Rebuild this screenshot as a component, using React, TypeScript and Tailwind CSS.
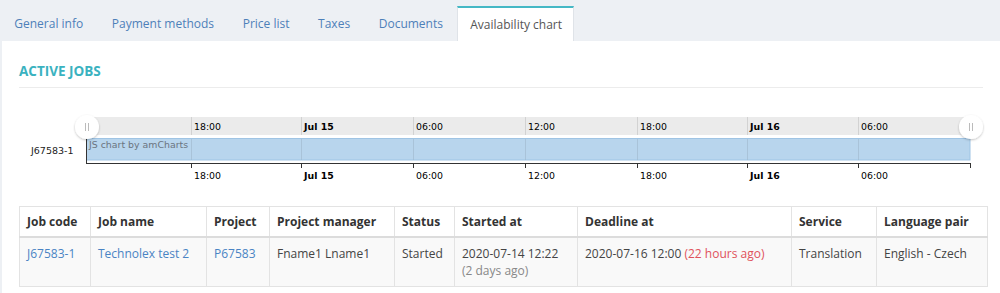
import React from "react";

const gridX = [191, 301, 413, 525, 637, 747, 858];
const labels = [
  { t: "18:00", b: false },
  { t: "Jul 15", b: true },
  { t: "06:00", b: false },
  { t: "12:00", b: false },
  { t: "18:00", b: false },
  { t: "Jul 16", b: true },
  { t: "06:00", b: false },
];

function Chart() {
  const font = "'DejaVu Sans', Verdana, sans-serif";
  return (
    <svg width="998" height="90" viewBox="2 100 998 90" className="block">
      <defs>
        <filter id="sh" x="-50%" y="-50%" width="200%" height="200%">
          <feDropShadow dx="0" dy="1" stdDeviation="1.3" floodColor="#000" floodOpacity="0.25" />
        </filter>
      </defs>
      <text x="31" y="154" fontFamily={font} fontSize="9.5" fill="#222">J67583-1</text>
      <rect x="87" y="117" width="883" height="18" fill="#ebebeb" />
      {gridX.map((x) => (
        <line key={"g" + x} x1={x + 0.5} x2={x + 0.5} y1="117" y2="135" stroke="#d2d2d2" strokeWidth="1" />
      ))}
      <rect x="86.5" y="138.5" width="883.5" height="21.5" fill="#b8d5ed" stroke="#9fc4e4" strokeWidth="1" />
      {gridX.map((x) => (
        <line key={"b" + x} x1={x + 0.5} x2={x + 0.5} y1="139" y2="160" stroke="#9fb8cc" strokeOpacity="0.6" strokeWidth="1" />
      ))}
      <text x="89" y="148" fontFamily={font} fontSize="9.4" fill="#6b7480">JS chart by amCharts</text>
      <line x1="86" x2="970.5" y1="163.5" y2="163.5" stroke="#333" strokeWidth="1" />
      <line x1="86.5" x2="86.5" y1="138" y2="164" stroke="#333" strokeWidth="1" />
      {[...gridX, 970].map((x) => (
        <line key={"t" + x} x1={x + 0.5} x2={x + 0.5} y1="163" y2="168" stroke="#333" strokeWidth="1" />
      ))}
      {gridX.map((x, i) => (
        <text key={"lt" + i} x={x + 3} y="130" fontFamily={font} fontSize="9.4" fontWeight={labels[i].b ? "bold" : "normal"} fill="#000">
          {labels[i].t}
        </text>
      ))}
      {gridX.map((x, i) => (
        <text key={"lb" + i} x={x + 3} y="179" fontFamily={font} fontSize="9.4" fontWeight={labels[i].b ? "bold" : "normal"} fill="#000">
          {labels[i].t}
        </text>
      ))}
      {[87, 971].map((cx) => (
        <g key={"h" + cx}>
          <circle cx={cx} cy="127" r="12" fill="#fff" filter="url(#sh)" />
          <line x1={cx - 1.5} x2={cx - 1.5} y1="123" y2="131" stroke="#bbb" strokeWidth="1" />
          <line x1={cx + 1.5} x2={cx + 1.5} y1="123" y2="131" stroke="#bbb" strokeWidth="1" />
        </g>
      ))}
    </svg>
  );
}

const tabs = ["General info", "Payment methods", "Price list", "Taxes", "Documents"];

export default function App() {
  const th = "border border-[#e3e3e3] border-b-2 border-b-[#dcdcdc] px-[7px] py-[6px] text-left font-bold text-[#333] align-top";
  const td = "border border-[#e3e3e3] px-[7px] py-[7px] text-left align-top";
  return (
    <div className="w-[1000px] h-[293px] bg-[#edf0f4] overflow-hidden font-['Open_Sans',sans-serif]">
      <div className="flex h-[41px] items-end">
        {tabs.map((t) => (
          <div key={t} className="h-[35px] px-[14.3px] flex items-center text-[12px] text-[#4d80b9]">
            {t}
          </div>
        ))}
        <div className="h-[35px] pl-[12px] pr-[11px] flex items-center text-[12px] text-[#555] bg-white border-t-2 border-t-[#45b8c5] border-x border-x-[#dfe3e8]">
          Availability chart
        </div>
      </div>
      <div className="ml-[2px] bg-white h-[252px]">
        <div className="px-[17px] pt-[21px]">
          <div className="text-[13.5px] font-bold text-[#3ab2c0] leading-[18px] pb-[7px] border-b border-[#ececec]">
            ACTIVE JOBS
          </div>
        </div>
        <div className="pt-[12px]">
          <Chart />
        </div>
        <div className="px-[17px] pt-[16px]">
          <table className="border-collapse w-[968px] table-fixed text-[12px] leading-[17px] text-[#444]">
            <colgroup>
              <col className="w-[71px]" />
              <col className="w-[116px]" />
              <col className="w-[63px]" />
              <col className="w-[125px]" />
              <col className="w-[60px]" />
              <col className="w-[123px]" />
              <col className="w-[214px]" />
              <col className="w-[85px]" />
              <col className="w-[111px]" />
            </colgroup>
            <thead>
              <tr className="bg-white">
                <th className={th}>Job code</th>
                <th className={th}>Job name</th>
                <th className={th}>Project</th>
                <th className={th}>Project manager</th>
                <th className={th}>Status</th>
                <th className={th}>Started at</th>
                <th className={th}>Deadline at</th>
                <th className={th}>Service</th>
                <th className={th}>Language pair</th>
              </tr>
            </thead>
            <tbody>
              <tr className="bg-[#f9f9f9]">
                <td className={td}><span className="text-[#4a84c4]">J67583-1</span></td>
                <td className={td}><span className="text-[#4a84c4]">Technolex test 2</span></td>
                <td className={td}><span className="text-[#4a84c4]">P67583</span></td>
                <td className={td}>Fname1 Lname1</td>
                <td className={td}>Started</td>
                <td className={td}>
                  2020-07-14 12:22
                  <br />
                  <span className="text-[#888]">(2 days ago)</span>
                </td>
                <td className={td}>
                  2020-07-16 12:00 <span className="text-[#e0525c]">(22 hours ago)</span>
                </td>
                <td className={td}>Translation</td>
                <td className={td}>English - Czech</td>
              </tr>
            </tbody>
          </table>
        </div>
      </div>
    </div>
  );
}
